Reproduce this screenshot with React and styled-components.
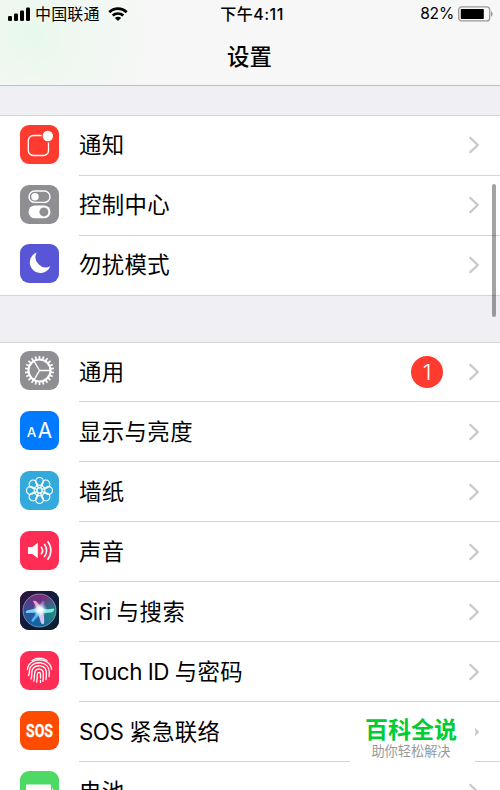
import styled, { createGlobalStyle } from "styled-components";

const GlobalStyle = createGlobalStyle`
  * {
    box-sizing: border-box;
  }
  body {
    margin: 0;
    background: #efeff4;
    color: #000;
    font-family: Inter, "Noto Sans CJK SC", sans-serif;
  }
`;

const Screen = styled.div`
  position: relative;
  width: 500px;
  height: 790px;
  overflow: hidden;
  background: #efeff4;
`;

const Header = styled.header`
  height: 86px;
  border-bottom: 1px solid #bdbdc1;
  background: radial-gradient(circle at 34px 36px, #e7f8eb 0, rgba(239, 248, 240, 0.8) 48px, rgba(246, 246, 246, 0) 125px), #f7f7f7;
`;

const StatusBar = styled.div`
  display: grid;
  grid-template-columns: 1fr auto 1fr;
  align-items: center;
  height: 28px;
  padding: 0 7px;
  font-size: 16px;
  line-height: 28px;
`;

const StatusSide = styled.div`
  display: flex;
  align-items: center;
  justify-content: ${({ $end }) => ($end ? "flex-end" : "flex-start")};
  gap: 4px;
`;

const Carrier = styled.span`
  margin-right: 4px;
  letter-spacing: 0.15px;
`;

const Time = styled.span`
  padding-left: 4px;
  font-weight: 500;
  letter-spacing: 0.5px;
`;

const Percent = styled.span`
  font-size: 15.6px;
  letter-spacing: -0.2px;
`;

const Title = styled.h1`
  margin: 0;
  height: 57px;
  padding-right: 1px;
  font-size: 22.4px;
  font-weight: 500;
  line-height: 57px;
  text-align: center;
`;

const Row = styled.div`
  display: flex;
  height: 60px;
  padding-left: 20px;
`;

const Group = styled.section`
  margin-top: ${({ $gap }) => $gap}px;
  border-top: 1px solid #d5d5d9;
  border-bottom: 1px solid #d5d5d9;
  background: #fff;

  ${Row}:${({ $short }) => $short}-child {
    height: 59px;
  }
`;

const IconTile = styled.div`
  flex: none;
  width: 39px;
  height: 39px;
  margin: auto 20px 12px 0;
  border-radius: 9px;
  overflow: hidden;
  background: ${({ $color }) => $color};

  svg {
    display: block;
  }
`;

const RowBody = styled.div`
  display: flex;
  flex: 1;
  align-items: center;
  padding-right: 20px;
  padding-bottom: ${({ $lift }) => $lift}px;
  border-bottom: 1px solid #d4d4d7;

  ${Row}:last-child & {
    border-bottom: 0;
  }
`;

const Label = styled.span`
  flex: 1;
  font-size: 22.4px;
  line-height: 56px;
  letter-spacing: 0.4px;
  white-space: pre;
`;

const Latin = styled.span`
  letter-spacing: -0.5px;
`;

const Badge = styled.span`
  width: 32px;
  height: 32px;
  margin-right: 25px;
  border-radius: 50%;
  background: #ff3b30;
  color: #fff;
  font-size: 22px;
  font-weight: 300;
  line-height: 32px;
  text-align: center;
`;

const Scrollbar = styled.div`
  position: absolute;
  top: 184px;
  right: 4px;
  width: 4px;
  height: 133px;
  border-radius: 2px;
  background: rgba(0, 0, 0, 0.36);
`;

const Watermark = styled.div`
  position: absolute;
  top: 711px;
  left: 350px;
  width: 125px;
  height: 66px;
  padding: 5px 3px 0 0;
  background: #fff;
  text-align: center;
`;

const WatermarkName = styled.div`
  color: #0c3;
  font-size: 23px;
  font-weight: 700;
  line-height: 28px;
`;

const WatermarkSlogan = styled.div`
  color: #999;
  font-size: 13.2px;
  line-height: 14px;
`;

const Signal = () => (
  <svg width="24" height="16" viewBox="0 0 24 16">
    <rect x="1" y="10" width="4" height="5" rx="1.3" />
    <rect x="7" y="7.5" width="4" height="7.5" rx="1.3" />
    <rect x="13" y="4.5" width="4" height="10.5" rx="1.3" />
    <rect x="19" y="1.5" width="4" height="13.5" rx="1.3" />
  </svg>
);

const Wifi = () => (
  <svg width="20" height="15" viewBox="0 0 20 15">
    <g fill="none" stroke="#000" strokeWidth="2.7">
      <path d="M1.3 5.2a12.6 12.6 0 0 1 17.4 0" />
      <path d="M4.7 8.6a7.8 7.8 0 0 1 10.6 0" />
    </g>
    <path d="M10 14 6.900 11a4.400 4.400 0 0 1 6.200 0z" />
  </svg>
);

const Battery = () => (
  <svg width="35" height="16" viewBox="0 0 35 16">
    <rect x=".7" y=".9" width="31" height="14" rx="3" fill="none" stroke="#999" strokeWidth="1.3" />
    <rect x="2.8" y="3" width="23" height="10" rx=".8" />
    <path d="M33 5.3c2.2 1 2.2 4.400 0 5.400z" fill="#999" />
  </svg>
);

const Chevron = () => (
  <svg width="12" height="18" viewBox="0 0 12 18">
    <path d="m1.700 1.300 8 7.700-8 7.700" fill="none" stroke="#c7c7cc" strokeWidth="2.2" />
  </svg>
);

const Tile = ({ children }) => (
  <svg width="39" height="39" viewBox="0 0 39 39" fill="none" stroke="#fff">
    {children}
  </svg>
);

const NotificationIcon = () => (
  <Tile>
    <path d="M21.500 10.500h-8.200a5 5 0 0 0-5 5v10a5 5 0 0 0 5 5h10.200a5 5 0 0 0 5-5v-8" strokeWidth="1.3" />
    <circle cx="27.800" cy="11" r="5.2" fill="#fff" stroke="none" />
  </Tile>
);

const ControlIcon = () => (
  <Tile>
    <rect x="9" y="6" width="21" height="11.400" rx="5.700" strokeWidth="1.4" />
    <circle cx="15" cy="11.700" r="3.7" fill="#fff" stroke="none" />
    <rect x="8.500" y="20.500" width="22" height="12.800" rx="6.400" fill="#fff" stroke="none" />
    <circle cx="23.900" cy="26.900" r="4.5" fill="#8e8e93" stroke="none" />
  </Tile>
);

const MoonIcon = () => (
  <Tile>
    <path d="M16.700 8.500A10.600 10.600 0 1 0 30.300 22.300 10.200 10.200 0 0 1 16.700 8.500z" fill="#fff" stroke="none" />
  </Tile>
);

const teeth = Array.from({ length: 22 }, (_, i) => (i * 360) / 22);

const GearIcon = () => (
  <Tile>
    <circle cx="19.5" cy="19.5" r="11" strokeWidth="2.1" />
    {teeth.map((angle) => (
      <path key={angle} d="M19.500 8.600V4.900" strokeWidth="1.7" transform={`rotate(${angle} 19.5 19.5)`} />
    ))}
    <path d="M19.500 19.500h10.500M19.500 19.500l-5.300-9.100M19.500 19.500l-5.300 9.100" strokeWidth="1.4" />
  </Tile>
);

const DisplayIcon = () => (
  <Tile>
    <g fill="#fff" stroke="none" fontFamily="Inter">
      <text x="6.700" y="26.300" fontSize="13.5" fontWeight="500">A</text>
      <text x="17.700" y="26.700" fontSize="20.8">A</text>
    </g>
  </Tile>
);

const petals = Array.from({ length: 8 }, (_, i) => i * 45);

const WallpaperIcon = () => (
  <Tile>
    {petals.map((angle) => (
      <g key={angle} transform={`rotate(${angle} 19.5 19.5)`}>
        <circle cx="19.5" cy="10.400" r="3.9" strokeWidth="1.2" />
        <path d="M16.200 12.500q.7 3.300 3.300 4.500 2.600-1.200 3.300-4.500" strokeWidth="1" />
      </g>
    ))}
    <circle cx="19.5" cy="19.5" r="2.7" strokeWidth="1.1" />
  </Tile>
);

const SoundIcon = () => (
  <Tile>
    <path d="M8 16h4.300l5.500-4.300v15.600L12.300 23H8z" fill="#fff" stroke="none" />
    <g strokeWidth="1.6">
      <path d="M21 15.700a6 6 0 0 1 0 7.600" />
      <path d="M24.200 13a10 10 0 0 1 0 13" />
      <path d="M27.500 10.300a14.300 14.300 0 0 1 0 18.400" />
    </g>
  </Tile>
);

const SiriIcon = () => (
  <Tile>
    <defs>
      <linearGradient id="siriBg" x1="0" y1="0" x2="1" y2="1">
        <stop offset="0" stopColor="#33143f" />
        <stop offset=".5" stopColor="#101c3a" />
        <stop offset="1" stopColor="#06202f" />
      </linearGradient>
      <linearGradient id="siriOrb" x1=".6" y1="0" x2=".4" y2="1">
        <stop offset="0" stopColor="#8a2476" />
        <stop offset=".4" stopColor="#4a4390" />
        <stop offset="1" stopColor="#0869a8" />
      </linearGradient>
      <radialGradient id="siriTeal" cx=".95" cy=".6" r=".6">
        <stop offset="0" stopColor="#178f82" />
        <stop offset="1" stopColor="#178f82" stopOpacity="0" />
      </radialGradient>
      <radialGradient id="siriGlow">
        <stop offset="0" stopColor="#fff" />
        <stop offset=".4" stopColor="#fff" stopOpacity=".85" />
        <stop offset="1" stopColor="#8ee6ff" stopOpacity="0" />
      </radialGradient>
    </defs>
    <path d="M0 0h39v39H0z" fill="url(#siriBg)" stroke="none" />
    <circle cx="19.5" cy="19.5" r="16.5" fill="url(#siriOrb)" stroke="none" />
    <circle cx="19.5" cy="19.5" r="16.5" fill="url(#siriTeal)" stroke="#8f9fb5" strokeWidth=".8" />
    <g stroke="none">
      <path d="M18.500 21 13 10q2-1 4 1l6 8z" fill="#fa9cba" />
      <path d="m18 19 4-9q4 0 2 4l-3 6z" fill="#a660b8" />
      <path d="M20 16.500 7 19.500q-2 1-1 2.500 7 0 13-1z" fill="#7fd3f3" />
      <path d="M19 17q8 2 15 .5.500 3-3 4-7 1-12-.5z" fill="#83eddc" />
      <path d="m17 19 4 13q1.500 2 3 .5 1-7-2-14z" fill="#d6c4f3" />
      <path d="m19 18-7.500 11q-.5 2 1.500 2 5-5 9-11z" fill="#49b4f2" />
      <circle cx="20" cy="19" r="7.5" fill="url(#siriGlow)" />
    </g>
  </Tile>
);

const FingerprintIcon = () => (
  <Tile>
    <g strokeWidth="1.3" strokeLinecap="round">
      <path d="M12 9.500a14 14 0 0 1 15 0" />
      <path d="M7.300 18.500C9 5.500 30 5.500 31.700 18.500" />
      <path d="M8.500 24.500c1.500-2 .3-4.500 1.500-7.500 3.500-8 19.300-7 19.300 4 0 2 0 3.200-.3 4.500" />
      <path d="M11 28c1.500-3 .2-6 1.300-9 2.700-6.500 14-5.300 14 2.500 0 3 .1 4.500-.4 7" />
      <path d="M13.800 30c1-4 .2-6.500 1.200-9.500 1.800-4 8.300-3 8.300 1.800 0 3.500.1 4.700-.4 8" />
      <path d="M16.700 31c.7-3.500.2-5.500.8-8.300.6-1.800 3-1.600 3 .5V27" />
      <path d="M20.500 29.500v2" />
    </g>
  </Tile>
);

const SosIcon = () => (
  <Tile>
    <text x="6" y="26.100" fill="#fff" strokeWidth=".3" fontFamily="Roboto" fontSize="18" fontWeight="700" textLength="27" lengthAdjust="spacingAndGlyphs">
      SOS
    </text>
  </Tile>
);

const BatteryIcon = () => (
  <Tile>
    <rect x="6" y="13.500" width="25" height="13" rx="1" fill="#fff" stroke="none" />
    <path d="M32 17c2 1 2 5 0 6z" fill="#fff" stroke="none" />
  </Tile>
);

const alerts = [
  { label: "通知", color: "#ff3b30", Icon: NotificationIcon },
  { label: "控制中心", color: "#8e8e93", Icon: ControlIcon },
  { label: "勿扰模式", color: "#5856d6", Icon: MoonIcon },
];

const general = [
  { label: "通用", color: "#8e8e93", Icon: GearIcon, badge: 1 },
  { label: "显示与亮度", color: "#007aff", Icon: DisplayIcon },
  { label: "墙纸", color: "#34aadc", Icon: WallpaperIcon },
  { label: "声音", color: "#ff2d55", Icon: SoundIcon },
  { latin: "Siri ", label: "与搜索", color: "#132344", Icon: SiriIcon },
  { latin: "Touch ID ", label: "与密码", color: "#ff2d55", Icon: FingerprintIcon },
  { latin: "SOS ", label: "紧急联络", color: "#ff4b00", Icon: SosIcon },
  { label: "电池", color: "#4cd964", Icon: BatteryIcon },
];

const SettingsGroup = ({ items, gap, short, lift }) => (
  <Group $gap={gap} $short={short}>
    {items.map(({ latin, label, color, Icon, badge }) => (
      <Row key={label}>
        <IconTile $color={color}>
          <Icon />
        </IconTile>
        <RowBody $lift={badge ? 1 : lift}>
          <Label>
            {latin && <Latin>{latin}</Latin>}
            {label}
          </Label>
          {badge && <Badge>{badge}</Badge>}
          <Chevron />
        </RowBody>
      </Row>
    ))}
  </Group>
);

const App = () => (
  <>
    <GlobalStyle />
    <Screen>
      <Header>
        <StatusBar>
          <StatusSide>
            <Signal />
            <Carrier>中国联通</Carrier>
            <Wifi />
          </StatusSide>
          <Time>下午4:11</Time>
          <StatusSide $end>
            <Percent>82%</Percent>
            <Battery />
          </StatusSide>
        </StatusBar>
        <Title>设置</Title>
      </Header>
      <SettingsGroup items={alerts} gap={29} short="last" lift={1} />
      <SettingsGroup items={general} gap={46} short="first" lift={0} />
      <Scrollbar />
      <Watermark>
        <WatermarkName>百科全说</WatermarkName>
        <WatermarkSlogan>助你轻松解决</WatermarkSlogan>
      </Watermark>
    </Screen>
  </>
);

export default App;
